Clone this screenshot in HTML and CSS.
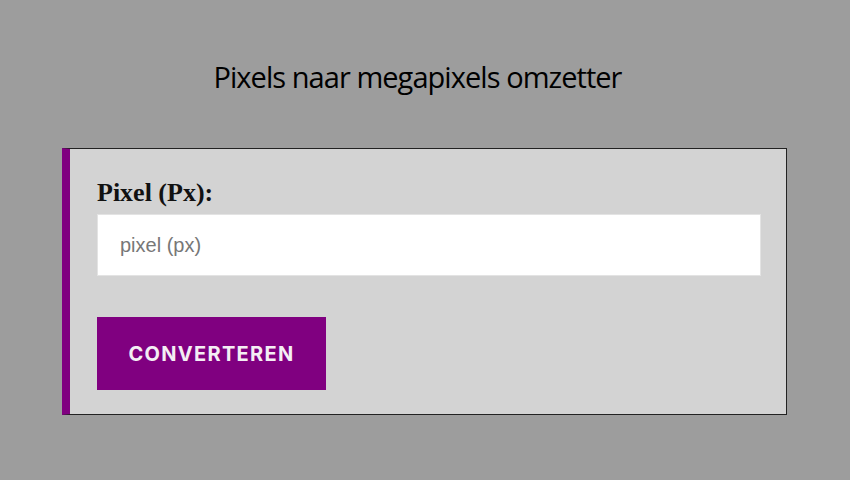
FILE: index.html
```html
<!DOCTYPE html>
<html>
<head>
<meta charset="utf-8">
<link rel="stylesheet" href="styles.css">
</head>
<body>
<div class="page">
  <h1 class="title">Pixels naar megapixels omzetter</h1>
  <div class="card">
    <label class="label" for="px">Pixel (Px):</label>
    <input class="input" id="px" type="text" placeholder="pixel (px)">
    <button class="btn">CONVERTEREN</button>
  </div>
</div>
</body>
</html>
```
FILE: styles.css
```css
html, body {
  margin: 0;
  padding: 0;
  background: #9d9d9d;
  width: 850px;
  height: 480px;
  overflow: hidden;
}
.page {
  display: flex;
  flex-direction: column;
  align-items: flex-start;
  padding: 55px 0 0 62px;
}
.title {
  margin: 0;
  width: 725px;
  box-sizing: border-box;
  padding-right: 14px;
  text-align: center;
  font-family: "Open Sans", sans-serif;
  font-weight: 400;
  font-size: 29px;
  letter-spacing: -0.95px;
  line-height: 44px;
  color: #000;
}
.card {
  margin-top: 49px;
  background: #d3d3d3;
  border: 1px solid #222;
  border-left: 8px solid #800080;
  display: flex;
  flex-direction: column;
  align-items: flex-start;
  padding: 0 25px 0 27px;
  box-sizing: border-box;
  width: 725px;
  height: 267px;
}
.label {
  margin-top: 28px;
  font-family: "Liberation Serif", serif;
  font-weight: 700;
  font-size: 26px;
  line-height: 32px;
  color: #111;
}
.input {
  margin-top: 5px;
  width: 664px;
  height: 62px;
  box-sizing: border-box;
  border: 1px solid #e3e3e3;
  background: #fff;
  padding: 0 22px;
  font-family: "Liberation Sans", sans-serif;
  font-size: 20px;
  outline: none;
}
.input::placeholder {
  color: #777;
}
.btn {
  margin-top: 41px;
  width: 229px;
  height: 73px;
  border: none;
  background: #800080;
  color: #f4eef4;
  font-family: Inter, sans-serif;
  font-weight: 700;
  font-size: 20px;
  letter-spacing: 1.3px;
  padding: 0;
}
```
